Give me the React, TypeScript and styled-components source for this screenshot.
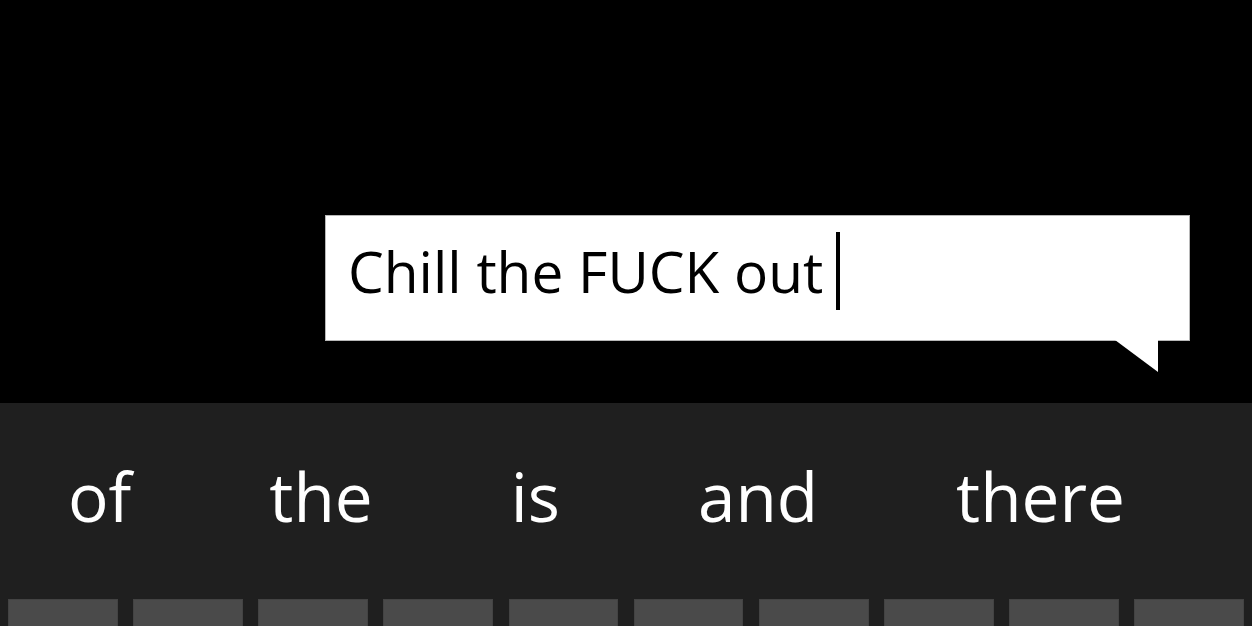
import React from "react";
import styled, { createGlobalStyle } from "styled-components";

const Global = createGlobalStyle`
  html, body {
    margin: 0;
    padding: 0;
    background: #000;
    overflow: hidden;
  }
  body {
    font-family: "Open Sans", "Noto Sans", sans-serif;
  }
`;

const Screen = styled.div`
  width: 1252px;
  height: 626px;
  display: flex;
  flex-direction: column;
  background: #000;
  overflow: hidden;
`;

const Stage = styled.div`
  height: 403px;
  flex: none;
  padding: 215px 0 0 325px;
  box-sizing: border-box;
`;

const Bubble = styled.div`
  position: relative;
  width: 865px;
  height: 126px;
  box-sizing: border-box;
  background: #fff;
  border: 1px solid #b8b8b8;
  display: flex;
  align-items: flex-start;
  padding: 17px 22px;

  &::after {
    content: "";
    position: absolute;
    top: 100%;
    right: 31px;
    width: 43px;
    height: 32px;
    background: #fff;
    clip-path: polygon(0 0, 100% 0, 100% 100%);
  }
`;

const Typed = styled.span`
  font-size: 56.8px;
  line-height: 76px;
  color: #000;
  white-space: pre;
`;

const Caret = styled.span`
  width: 4px;
  height: 78px;
  margin: -1px 0 0 13px;
  background: #000;
  flex: none;
`;

const Keyboard = styled.div`
  flex: 1;
  background: #1f1f1f;
  display: flex;
  flex-direction: column;
`;

const Suggestions = styled.div`
  height: 196px;
  box-sizing: border-box;
  padding: 48px 0 0 68px;
  display: flex;
  gap: 138px;
`;

const Suggestion = styled.span`
  font-size: 67.5px;
  line-height: 90px;
  color: #fff;
`;

const KeyRow = styled.div`
  flex: 1;
  display: flex;
  gap: 15.6px;
  padding: 0 8px;
`;

const Key = styled.div`
  flex: 1;
  background: #4a4a4a;
  border: 1px solid #434343;
  border-bottom: none;
`;

const words = ["of", "the", "is", "and", "there"];

export default function App() {
  return (
    <>
      <Global />
      <Screen>
        <Stage>
          <Bubble>
            <Typed>Chill the FUCK out</Typed>
            <Caret />
          </Bubble>
        </Stage>
        <Keyboard>
          <Suggestions>
            {words.map((w) => (
              <Suggestion key={w}>{w}</Suggestion>
            ))}
          </Suggestions>
          <KeyRow>
            {Array.from({ length: 10 }).map((_, i) => (
              <Key key={i} />
            ))}
          </KeyRow>
        </Keyboard>
      </Screen>
    </>
  );
}
